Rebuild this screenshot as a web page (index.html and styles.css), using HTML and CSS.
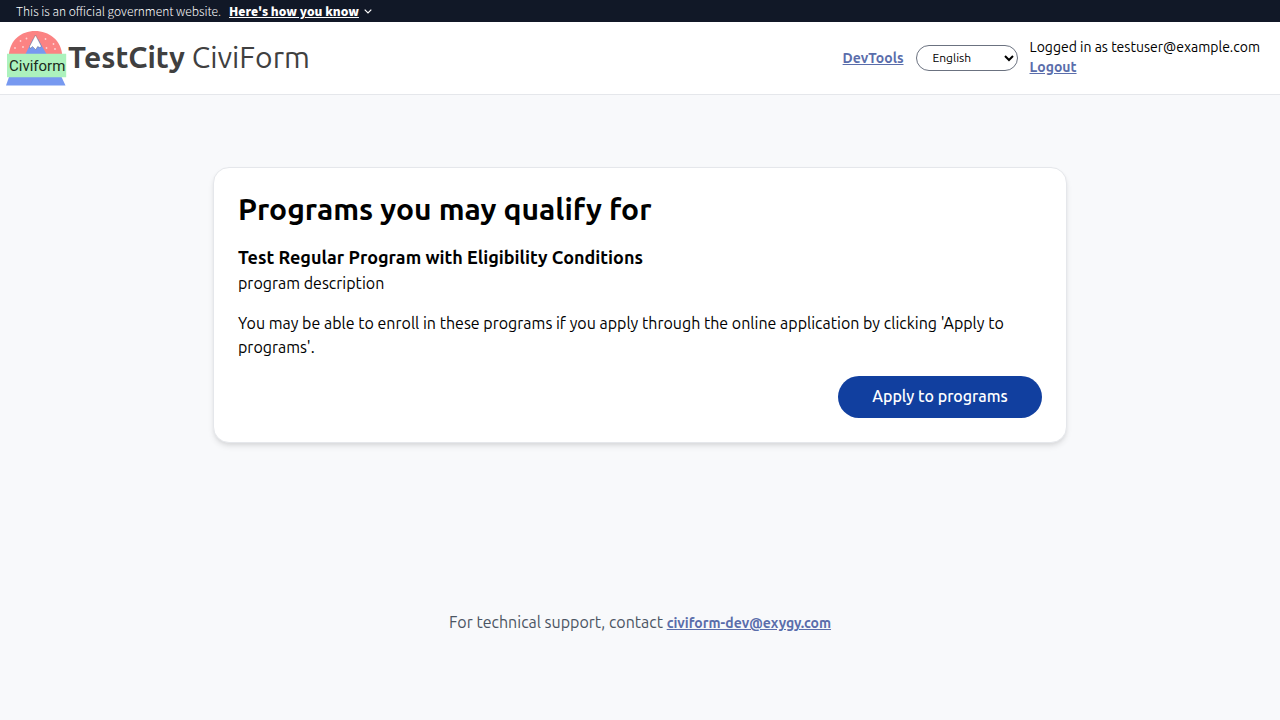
FILE: index.html
```html
<!DOCTYPE html>
<html lang="en">
<head>
<meta charset="utf-8">
<title>TestCity CiviForm</title>
<meta name="viewport" content="width=device-width, initial-scale=1">
<link rel="stylesheet" href="styles.css">
</head>
<body>
<div class="banner">
  <span>This is an official government website.</span>
  <button class="banner-toggle" type="button"><span class="banner-label">Here's how you know</span>
    <svg class="chevron" viewBox="0 0 8 5" aria-hidden="true"><path d="M.7.7L4 4 7.300.7" fill="none" stroke="currentColor" stroke-width="1.200"/></svg>
  </button>
</div>
<header class="header">
  <div class="brand">
    <svg class="logo" viewBox="0 0 64 58" role="img" aria-label="Civiform logo">
      <path d="M4.800 26C6 11 17 2 31 2s26 9 27.200 24z" fill="#fb8383"/>
      <path d="M21 26L29 10h5l9 16z" fill="#7799f0"/>
      <path d="M31.500 6L25.500 17.500l.8 2 2.200-2 3.200 3.200 2-3.200 2 1 1.800-1z" fill="#fff" stroke="#556" stroke-width=".4"/>
      <g fill="#fff" opacity=".65"><circle cx="16.500" cy="12" r=".9"/><circle cx="22.500" cy="9.500" r=".9"/><circle cx="11" cy="19" r=".9"/><circle cx="19" cy="18" r=".9"/><circle cx="41.500" cy="10" r=".9"/><circle cx="49.500" cy="15" r=".9"/><circle cx="42.500" cy="19" r=".9"/><circle cx="51" cy="20" r=".9"/></g>
      <path d="M5 48h52.500l4 8.500H2z" fill="#7799f0"/>
      <path d="M3 24.700h59.200v23.600H3z" fill="#acf2bd"/>
      <text class="logo-text" x="5" y="42">Civiform</text>
    </svg>
    <span class="brand-name"><b>TestCity</b> CiviForm</span>
  </div>
  <nav class="tools">
    <a class="link" href="#devtools">DevTools</a>
    <select class="language" aria-label="Language"><option>English</option></select>
    <div class="account"><span>Logged in as testuser@example.com</span><a class="link" href="#logout">Logout</a></div>
  </nav>
</header>
<main class="main">
  <section class="card">
    <h1 class="title">Programs you may qualify for</h1>
    <h2 class="program">Test Regular Program with Eligibility Conditions</h2>
    <p class="text">program description</p>
    <p class="text note">You may be able to enroll in these programs if you apply through the online application by clicking 'Apply to programs'.</p>
    <div class="actions"><button class="apply" type="button">Apply to programs</button></div>
  </section>
</main>
<footer class="footer">For technical support, contact <a class="link" href="mailto:civiform-dev@exygy.com">civiform-dev@exygy.com</a></footer>
</body>
</html>
```
FILE: styles.css
```css
* { box-sizing: border-box; }
body {
  margin: 0;
  min-height: 100vh;
  background: #f8f9fb;
  color: #000;
  font: 400 16px/24px Ubuntu, "Open Sans", "Noto Sans", sans-serif;
}
h1, h2, p { margin: 0; }
.banner {
  display: flex;
  align-items: center;
  gap: 8px;
  height: 22px;
  padding: 0 16px;
  background: #111827;
  color: #fff;
  font: 300 12px/16px "Source Sans Pro", "Noto Sans CJK SC", sans-serif;
}
.banner-toggle {
  display: flex;
  align-items: center;
  gap: 5px;
  padding: 0;
  border: 0;
  background: none;
  color: inherit;
  font: inherit;
}
.banner-label { font-weight: 900; text-decoration: underline; }
.chevron { width: 8px; height: 5px; }
.header {
  display: flex;
  align-items: center;
  justify-content: space-between;
  min-height: 73px;
  padding: 0 20px 0 4px;
  border-bottom: 1px solid #e5e7eb;
  background: #fff;
}
.brand { display: flex; align-items: center; }
.logo { width: 64px; height: 58px; }
.logo-text { font: 400 15px Roboto, "Liberation Sans", sans-serif; fill: #1b2b20; }
.brand-name { padding-bottom: 2px; color: #404040; font-size: 30px; line-height: 36px; }
.brand-name b { font-weight: 600; }
.tools { display: flex; align-items: center; gap: 12px; font-size: 14px; line-height: 20px; }
.account { display: flex; flex-direction: column; align-items: flex-start; padding-bottom: 2px; }
.link { color: #5a6dab; font-size: 14px; font-weight: 600; }
.language {
  width: 102px;
  height: 26px;
  padding: 0 0 2px 12px;
  border: 1px solid #6b7280;
  border-radius: 13px;
  background: #fff;
  color: #000;
  font: 400 12px/16px Ubuntu, "Open Sans", sans-serif;
}
.main { display: flex; justify-content: center; padding: 72px 16px 0; }
.card {
  width: 100%;
  max-width: 854px;
  padding: 23px 24px 24px;
  border: 1px solid #e5e7eb;
  border-radius: 16px;
  background: #fff;
  box-shadow: 0 4px 6px -1px rgba(0, 0, 0, .1), 0 2px 4px -1px rgba(0, 0, 0, .06);
}
.title { font-size: 30px; line-height: 36px; font-weight: 600; }
.program { margin-top: 16px; font-size: 18px; line-height: 28px; font-weight: 600; }
.note { margin-top: 16px; }
.actions { display: flex; justify-content: flex-end; margin-top: 17px; }
.apply {
  min-width: 204px;
  height: 42px;
  padding: 0 32px 2px;
  border: 0;
  border-radius: 21px;
  background: #113f9f;
  color: #fff;
  font: 550 16px/24px Ubuntu, "Open Sans", sans-serif;
}
.footer { padding: 167px 16px 86px; text-align: center; color: #4b5563; }
```
